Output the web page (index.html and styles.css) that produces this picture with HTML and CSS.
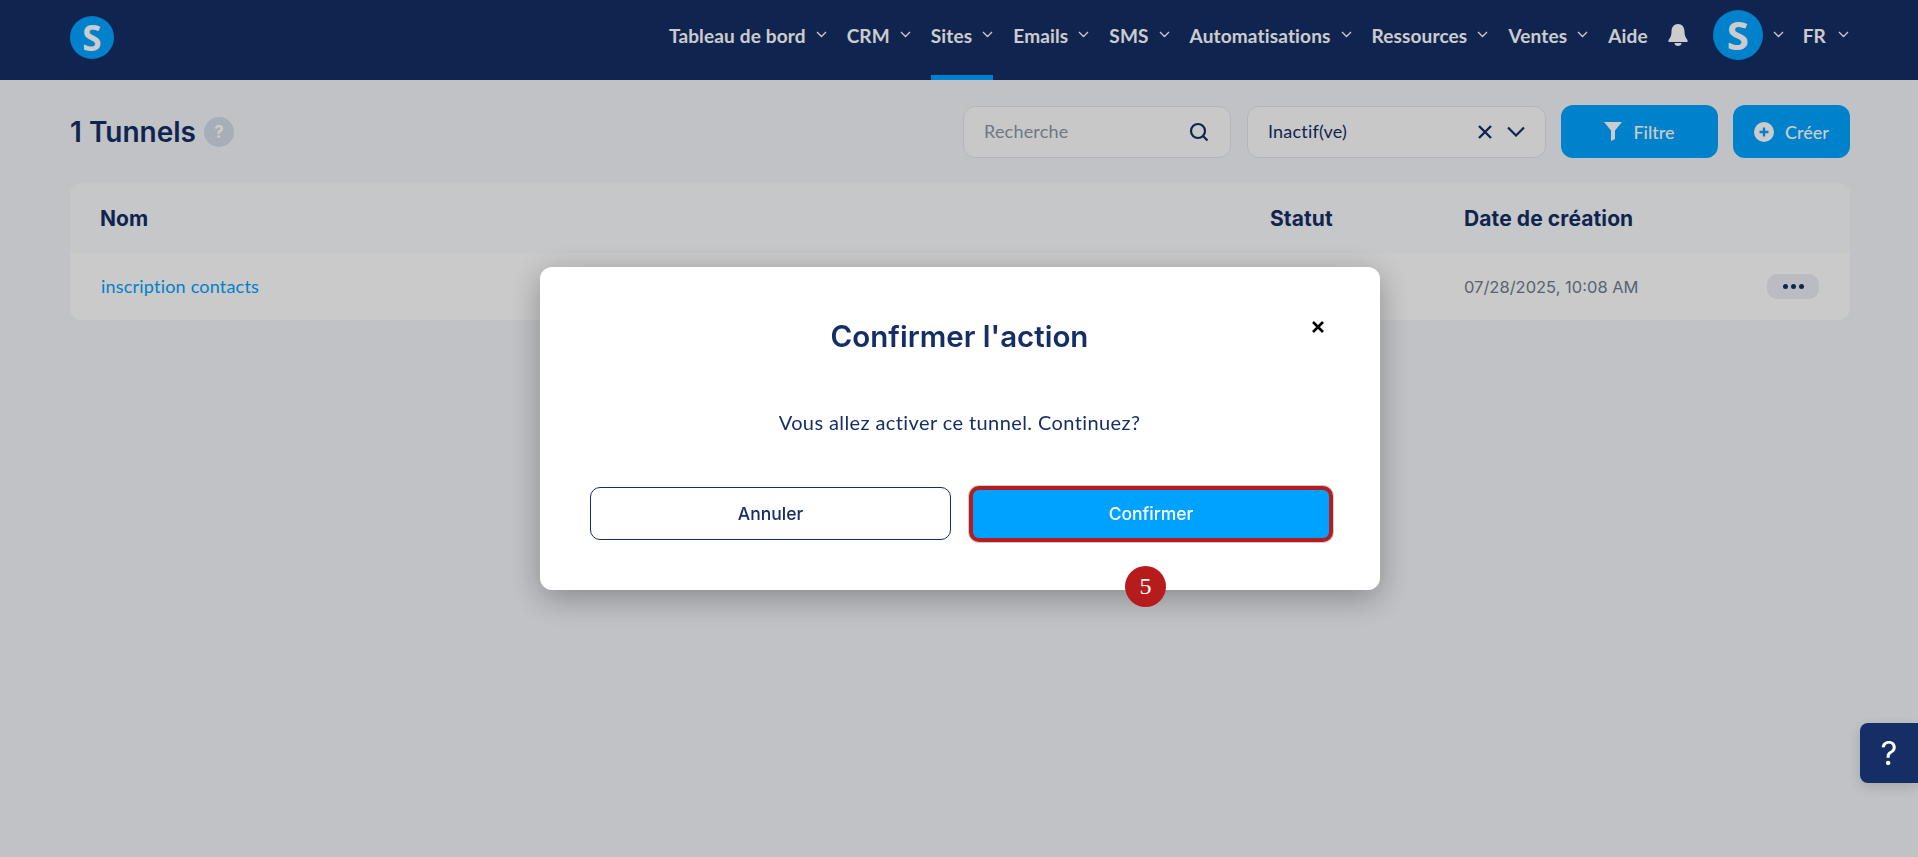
FILE: index.html
```html
<!DOCTYPE html>
<html lang="fr">
<head>
  <meta charset="UTF-8">
  <meta name="viewport" content="width=device-width, initial-scale=1.0">
  <title>Tunnels</title>
  <link rel="stylesheet" href="styles.css">
</head>
<body>
  <header class="topbar">
    <div class="logo">S</div>
    <nav class="nav">
      <a class="nav-item">Tableau de bord <svg class="chev" viewBox="0 0 11 7"><path d="M1 1l4.500 4.500L10 1"/></svg></a>
      <a class="nav-item">CRM <svg class="chev" viewBox="0 0 11 7"><path d="M1 1l4.500 4.500L10 1"/></svg></a>
      <a class="nav-item active">Sites <svg class="chev" viewBox="0 0 11 7"><path d="M1 1l4.500 4.500L10 1"/></svg></a>
      <a class="nav-item">Emails <svg class="chev" viewBox="0 0 11 7"><path d="M1 1l4.500 4.500L10 1"/></svg></a>
      <a class="nav-item">SMS <svg class="chev" viewBox="0 0 11 7"><path d="M1 1l4.500 4.500L10 1"/></svg></a>
      <a class="nav-item">Automatisations <svg class="chev" viewBox="0 0 11 7"><path d="M1 1l4.500 4.500L10 1"/></svg></a>
      <a class="nav-item">Ressources <svg class="chev" viewBox="0 0 11 7"><path d="M1 1l4.500 4.500L10 1"/></svg></a>
      <a class="nav-item">Ventes <svg class="chev" viewBox="0 0 11 7"><path d="M1 1l4.500 4.500L10 1"/></svg></a>
      <a class="nav-item">Aide</a>
      <svg class="bell" viewBox="0 0 20 22"><path d="M10 0c4 0 6.500 3 6.500 7.500 0 4 1 6 3 8.500v2H.5v-2c2-2.500 3-4.500 3-8.500C3.500 3 6 0 10 0z"/><path d="M6.500 19h7c0 2-1.500 3-3.500 3s-3.500-1-3.500-3z"/></svg>
      <div class="avatar">S</div>
      <svg class="chev chev-user" viewBox="0 0 11 7"><path d="M1 1l4.500 4.500L10 1"/></svg>
      <a class="nav-item lang">FR <svg class="chev" viewBox="0 0 11 7"><path d="M1 1l4.500 4.500L10 1"/></svg></a>
    </nav>
  </header>

  <main class="page">
    <div class="toolbar">
      <div class="title-wrap">
        <h1>1 Tunnels</h1>
        <span class="help-dot">?</span>
      </div>
      <div class="actions">
        <div class="field search">
          <span class="placeholder">Recherche</span>
          <svg class="ico-search" viewBox="0 0 20 20"><circle cx="9" cy="9" r="7"/><path d="M14 14l4.500 4.500"/></svg>
        </div>
        <div class="field status">
          <span>Inactif(ve)</span>
          <svg class="ico-x" viewBox="0 0 14 14"><path d="M1 1l12 12M13 1L1 13"/></svg>
          <svg class="ico-down" viewBox="0 0 18 11"><path d="M1 1.500L9 9.500l8-8"/></svg>
        </div>
        <button class="btn btn-filter">
          <svg class="ico-filter" viewBox="0 0 18 19"><path d="M0 0h18l-7 8.500V17l-4 2V8.500z"/></svg>
          Filtre
        </button>
        <button class="btn btn-create">
          <svg class="ico-plus" viewBox="0 0 20 20"><circle cx="10" cy="10" r="10"/><path d="M10 5.500v9M5.500 10h9"/></svg>
          Créer
        </button>
      </div>
    </div>

    <section class="table">
      <div class="table-row table-head">
        <span>Nom</span>
        <span>Statut</span>
        <span>Date de création</span>
      </div>
      <div class="table-row table-body">
        <a class="link">inscription contacts</a>
        <span></span>
        <span class="date">07/28/2025, 10:08 AM</span>
        <button class="more"><i></i><i></i><i></i></button>
      </div>
    </section>
  </main>

  <div class="overlay">
    <div class="modal">
      <svg class="close" viewBox="0 0 12 12"><path d="M1 1l10 10M11 1L1 11"/></svg>
      <h2>Confirmer l'action</h2>
      <p>Vous allez activer ce tunnel. Continuez?</p>
      <div class="modal-btns">
        <button class="btn-cancel">Annuler</button>
        <button class="btn-confirm">Confirmer</button>
      </div>
      <span class="step">5</span>
    </div>
  </div>

  <button class="help-tab">?</button>
</body>
</html>
```

FILE: styles.css
```css
* { box-sizing: border-box; }
body { margin: 0; height: 857px; overflow: hidden; background: #f0f3f8; color: #152e65; font-family: "Lato", sans-serif; }

.topbar { height: 80px; background: #152e65; display: flex; align-items: center; justify-content: space-between; padding: 0 69px 0 70px; }
.logo { width: 44px; height: 43px; margin-bottom: 5px; border-radius: 50%; background: #00a2ff; color: #fff; font: 700 35px/43px "Open Sans", sans-serif; text-align: center; }
.nav { display: flex; align-items: center; height: 80px; color: #fff; font-size: 19px; font-weight: 700; letter-spacing: 0.15px; }
.nav-item { display: flex; align-items: center; gap: 10px; height: 80px; padding-bottom: 9px; margin-right: 20px; position: relative; white-space: nowrap; }
.nav-item.active::after { content: ""; position: absolute; left: 0; right: 0; bottom: 0; height: 5px; background: #00a2ff; }
.nav-item.lang { margin: 0 0 0 19px; gap: 12px; }
.chev { width: 11px; height: 7px; fill: none; stroke: #fff; stroke-width: 1.300; margin-top: -2px; flex: none; }
.chev-user { margin: 0 0 11px; }
.bell { width: 20px; height: 22px; fill: #fff; margin: 0 25px 10px 0; }
.avatar { width: 50px; height: 50px; margin: 0 10px 10px 0; border-radius: 50%; background: #00a2ff; color: #fff; font: 700 40px/50px "Open Sans", sans-serif; text-align: center; letter-spacing: 0; }

.page { padding: 25px 68px 0 70px; }
.toolbar { display: flex; align-items: center; justify-content: space-between; height: 53px; }
.title-wrap { display: flex; align-items: center; gap: 8px; }
h1 { margin: 0; font: 600 28px/40px "Inter", sans-serif; }
.help-dot { width: 30px; height: 30px; border-radius: 50%; background: #d2dae6; color: #fff; font: 700 17px/30px "Inter", sans-serif; text-align: center; }
.actions { display: flex; align-items: center; }
.field { height: 52px; border: 1px solid #dfe3ea; border-radius: 12px; background: #fbfbfb; display: flex; align-items: center; font-size: 18px; letter-spacing: 0.2px; }
.field > span { margin-top: -2px; }
.search { width: 268px; padding: 0 21px 0 20px; justify-content: space-between; margin-right: 16px; }
.placeholder { color: #8c95a6; }
.ico-search { width: 20px; height: 20px; fill: none; stroke: #152e65; stroke-width: 2.200; }
.status { width: 299px; padding: 0 20px 0 20px; margin-right: 15px; }
.status span { flex: 1; }
.ico-x { width: 14px; height: 14px; fill: none; stroke: #152e65; stroke-width: 2.400; margin-right: 15px; }
.ico-down { width: 18px; height: 11px; fill: none; stroke: #152e65; stroke-width: 2.200; }
.btn { height: 53px; border: 0; border-radius: 12px; background: #00a2ff; color: #fff; font: 500 18px "Lato", sans-serif; display: flex; align-items: center; justify-content: center; }
.btn-filter { width: 157px; gap: 11px; margin-right: 15px; }
.btn-create { width: 117px; gap: 11px; }
.ico-filter { width: 18px; height: 19px; fill: #fff; }
.ico-plus { width: 20px; height: 20px; fill: #fff; stroke: #00a2ff; stroke-width: 2.400; }
.ico-plus circle { stroke: none; }

.table { margin-top: 25px; border-radius: 12px; overflow: hidden; background: #fdfdfd; }
.table-row { display: grid; grid-template-columns: 1170px 194px 1fr 52px; padding: 0 31px 0 30px; align-items: center; }
.table-head { height: 70px; background: #f8f9fb; font: 700 21px "Inter", sans-serif; letter-spacing: 0.1px; grid-template-columns: 1170px 194px 1fr; }
.table-body { height: 67px; background: #fdfdfd; }
.link { color: #00a2ff; font-size: 18px; letter-spacing: 0.2px; padding: 0 0 2px 1px; }
.date { color: #6f7a8e; font: 400 16.500px "Inter", sans-serif; }
.more { height: 25px; border: 0; border-radius: 10px; background: #e9ecf2; display: flex; align-items: center; justify-content: center; gap: 3px; padding: 0; }
.more i { width: 5px; height: 5px; border-radius: 50%; background: #152e65; }

.overlay { position: fixed; inset: 0; background: rgba(0, 0, 0, 0.2); display: flex; justify-content: center; align-items: flex-start; padding: 267px 0 0 2px; }
.modal { position: relative; width: 840px; height: 323px; background: #fff; border-radius: 12px; padding: 49px 51px 0 50px; box-shadow: 0 8px 32px rgba(0, 0, 0, 0.3); text-align: center; }
.modal h2 { margin: 0; font: 600 29.500px/40px "Inter", sans-serif; color: #152e65; }
.modal p { margin: 54px 0 0; font-size: 20px; line-height: 24px; letter-spacing: 0.4px; color: #152e65; }
.close { position: absolute; top: 54px; right: 56px; width: 12px; height: 12px; fill: none; stroke: #000; stroke-width: 2.600; }
.modal-btns { display: grid; grid-template-columns: 361px 1fr; gap: 22px; margin-top: 53px; align-items: center; }
.btn-cancel { height: 53px; border: 1px solid #152e65; border-radius: 10px; background: #fff; color: #152e65; font: 500 17.500px "Inter", sans-serif; }
.btn-confirm { height: 48px; border: 0; border-radius: 6px; background: #00a2ff; color: #fff; font: 500 17.500px "Inter", sans-serif; box-shadow: 0 0 0 4px #b71c1c, 0 0 0 5px rgba(0, 0, 0, 0.2); }
.step { position: absolute; left: 585px; top: 299px; width: 41px; height: 41px; border-radius: 50%; background: #b71c1c; color: #fff; font: 400 24px/41px "Liberation Serif", serif; text-align: center; }

.help-tab { position: fixed; right: 0; top: 723px; width: 58px; height: 60px; border: 0; border-radius: 8px 0 0 8px; background: #152e65; color: #fff; font: 400 33px "Inter", sans-serif; box-shadow: 0 4px 14px rgba(0, 0, 0, 0.15); }
```
